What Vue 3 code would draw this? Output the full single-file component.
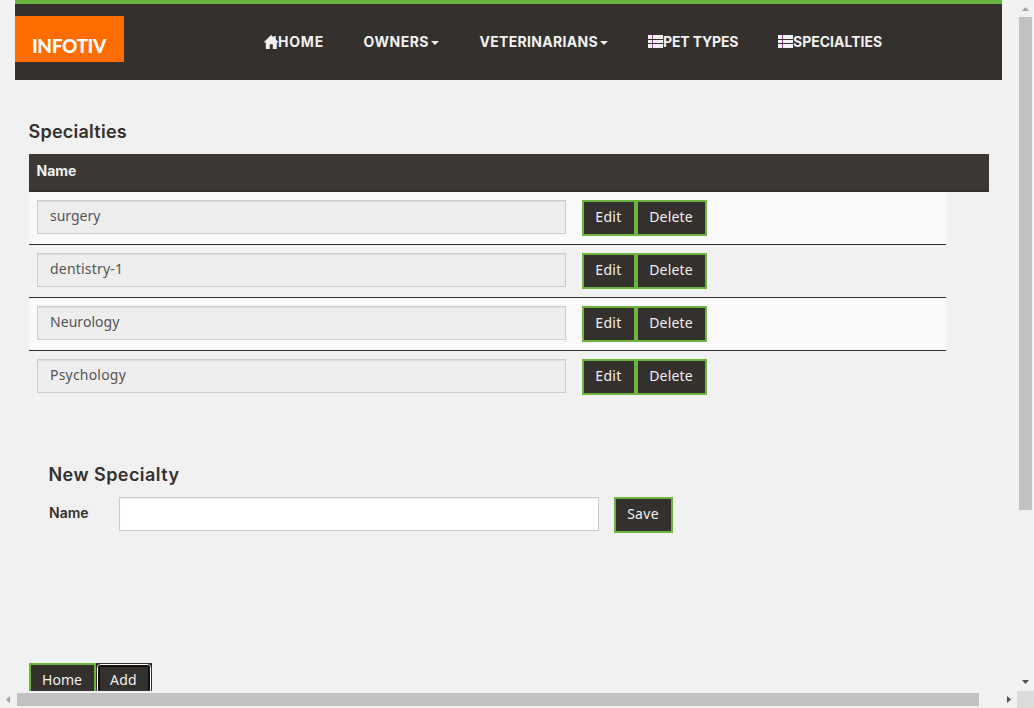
<script setup>
const navItems = [
  { key: 'home', label: 'HOME', icon: 'home' },
  { key: 'owners', label: 'OWNERS', caret: true },
  { key: 'vets', label: 'VETERINARIANS', caret: true },
  { key: 'pets', label: 'PET TYPES', icon: 'list' },
  { key: 'specs', label: 'SPECIALTIES', icon: 'list' },
]
const specialties = [
  { key: 'surgery', name: 'surgery' },
  { key: 'dentistry', name: 'dentistry-1' },
  { key: 'neurology', name: 'Neurology' },
  { key: 'psychology', name: 'Psychology' },
]
</script>

<template>
  <div class="window">
    <div class="page">
      <header class="navbar">
        <div class="brand"><span>INFOTIV</span></div>
        <nav class="menu">
          <a v-for="item in navItems" :key="item.key" :class="['item', item.key]">
            <svg v-if="item.icon === 'home'" class="icon" width="14" height="14" viewBox="0 0 14 14">
              <path d="M7 0 L9.8 2.6 V1 H11.8 V4.4 L14.4 7 V7.6 H12.8 V14 H8.8 V9.2 H5.8 V14 H1.8 V7.6 H0 V7 Z" />
            </svg>
            <svg v-if="item.icon === 'list'" class="icon list" width="15" height="13" viewBox="0 0 15 13" shape-rendering="crispEdges">
              <path d="M0 0h4v4H0zM5 0h10v4H5zM0 5h4v3H0zM5 5h10v3H5zM0 9h4v4H0zM5 9h10v4H5z" />
              <path class="shade" d="M4 0h1v4H4zM4 5h1v3H4zM4 9h1v4H4z" />
            </svg>
            <span class="label">{{ item.label }}</span>
            <i v-if="item.caret" class="caret"></i>
          </a>
        </nav>
      </header>

      <main class="content">
        <h2 class="title">Specialties</h2>
        <div class="thead"><span>Name</span></div>
        <div class="tbody">
          <div v-for="s in specialties" :key="s.key" class="row">
            <div class="field readonly"><span :class="s.key">{{ s.name }}</span></div>
            <button class="btn edit"><span>Edit</span></button>
            <button class="btn delete"><span>Delete</span></button>
          </div>
        </div>

        <section class="new">
          <h2 class="title new-title">New Specialty</h2>
          <div class="form">
            <label>Name</label>
            <div class="field"></div>
            <button class="btn save"><span>Save</span></button>
          </div>
        </section>

        <div class="actions">
          <button class="btn home-btn"><span>Home</span></button>
          <button class="btn add"><span>Add</span></button>
        </div>
      </main>
    </div>

    <div class="vbar">
      <svg class="arrow dim" width="17" height="17" viewBox="0 0 17 17"><path d="M5 11 L8.5 7 L12 11 Z" /></svg>
      <div class="vthumb"></div>
      <svg class="arrow down" width="17" height="17" viewBox="0 0 17 17"><path d="M5 6 L8.5 10 L12 6 Z" /></svg>
    </div>
    <div class="hbar">
      <svg class="arrow dim" width="17" height="17" viewBox="0 0 17 17"><path d="M10 5 L6 8.5 L10 12 Z" /></svg>
      <div class="hthumb"></div>
      <svg class="arrow right" width="17" height="17" viewBox="0 0 17 17"><path d="M7 5 L11 8.5 L7 12 Z" /></svg>
    </div>
    <div class="corner"></div>
  </div>
</template>

<style>
body { background: #f1f1f1; overflow: hidden; }
</style>

<style scoped>
.window {
  width: 1034px;
  height: 708px;
  display: grid;
  grid-template: 691px 17px / 1017px 17px;
  overflow: hidden;
  background: #f1f1f1;
  color: #34302d;
  font: 14px/20px "Noto Sans", "Open Sans", sans-serif;
}
.window * { box-sizing: border-box; }
.page { overflow: hidden; min-height: 0; }

.navbar {
  margin: 0 15px;
  width: 987px;
  height: 80px;
  border-top: 4px solid #6db33f;
  background: #34302d;
  display: flex;
}
.brand {
  margin-top: 12px;
  width: 109px;
  height: 46px;
  padding: 19px 0 0 17px;
  background: #ff6c00;
  color: #fff;
  font: 900 19px/22px Lato, sans-serif;
  letter-spacing: -0.4px;
}
.menu { display: flex; margin-left: 120px; height: 76px; }
.item {
  display: flex;
  align-items: center;
  padding-left: 20px;
  color: #f1f1f1;
  font: 700 14px/20px Inter, sans-serif;
  white-space: nowrap;
}
.home { width: 100px; letter-spacing: 0.8px; }
.owners { width: 116px; letter-spacing: 0.5px; }
.vets { width: 168px; letter-spacing: 0.3px; }
.pets { width: 130px; letter-spacing: -0.15px; }
.specs { width: 144px; }
.owners .label, .vets .label { margin-left: -0.5px; }
.icon { flex: none; fill: #f1f1f1; overflow: visible; }
.home .icon { margin-top: -1px; }
.icon.list { margin-top: -1px; }
.shade { fill: #9b3f96; }
.caret {
  margin-left: 2px;
  margin-top: 2px;
  border: 4px solid transparent;
  border-top-color: #f1f1f1;
  border-bottom: 0;
}

.content { padding: 40px 0 0 29px; }
.title {
  margin: 0 0 0 -0.5px;
  height: 34px;
  font: 600 18px/24px Inter, sans-serif;
  letter-spacing: 0.25px;
}
.thead {
  width: 960px;
  height: 38px;
  padding: 7px 7.5px 0;
  background: #3c3833;
  border-bottom: 2px solid #34302d;
  color: #f1f1f1;
  font: 700 14px/20px Inter, sans-serif;
}
.tbody { width: 917px; }
.row {
  height: 53px;
  padding: 8px;
  display: flex;
  border-bottom: 1px solid #34302d;
}
.row:nth-child(odd) { background: #f9f9f9; }
.row:last-child { border-bottom: 0; }
.field {
  height: 34px;
  background: #fff;
  border: 1px solid #ccc;
  box-shadow: inset 0 1px 1px rgba(0, 0, 0, 0.075);
}
.readonly {
  width: 529px;
  margin-right: 16px;
  padding: 5px 12px;
  background: #eee;
  color: #555;
}
.dentistry { letter-spacing: 0.2px; }
.psychology { letter-spacing: 0.2px; }
.neurology { letter-spacing: 0.05px; }
.btn {
  height: 36px;
  margin: 0;
  padding: 0 1px 2px 0;
  border: 2px solid #6db33f;
  border-radius: 0;
  background: #34302d;
  color: #f1f1f1;
  font: 14px/20px "Noto Sans", "Open Sans", sans-serif;
  text-align: center;
  white-space: nowrap;
}
.edit { width: 54px; letter-spacing: 0.3px; }
.delete { width: 71px; letter-spacing: 0.15px; }

.new { margin: 59px 0 0 20px; }
.new-title { letter-spacing: 0.45px; }
.form { display: flex; }
.form label {
  width: 70px;
  padding-top: 6px;
  font: 600 14px/20px Inter, sans-serif;
}
.form .field { width: 480px; margin-right: 15px; }
.save { width: 59px; letter-spacing: 0.3px; }

.actions { display: flex; margin-top: 130px; }
.home-btn { width: 67px; }
.add {
  position: relative;
  width: 56px;
  border: 1px solid #34302d;
  letter-spacing: 0.3px;
}
.add::before {
  content: "";
  position: absolute;
  inset: 0;
  border: 1px solid #fff;
  border-radius: 4px;
}
.add::after {
  content: "";
  position: absolute;
  inset: 1px;
  border: 2px solid #101010;
  border-radius: 3px;
}

.vbar { display: flex; flex-direction: column; align-items: center; }
.vthumb { width: 13px; height: 493px; background: #c1c1c1; }
.hbar { display: flex; align-items: center; }
.hthumb { width: 962px; height: 13px; background: #c1c1c1; }
.arrow { display: block; flex: none; fill: #505050; }
.arrow.dim { fill: #a3a3a3; }
.arrow.down { margin-top: auto; }
.arrow.right { margin-left: auto; }
.corner { background: #dcdcdc; }
</style>
